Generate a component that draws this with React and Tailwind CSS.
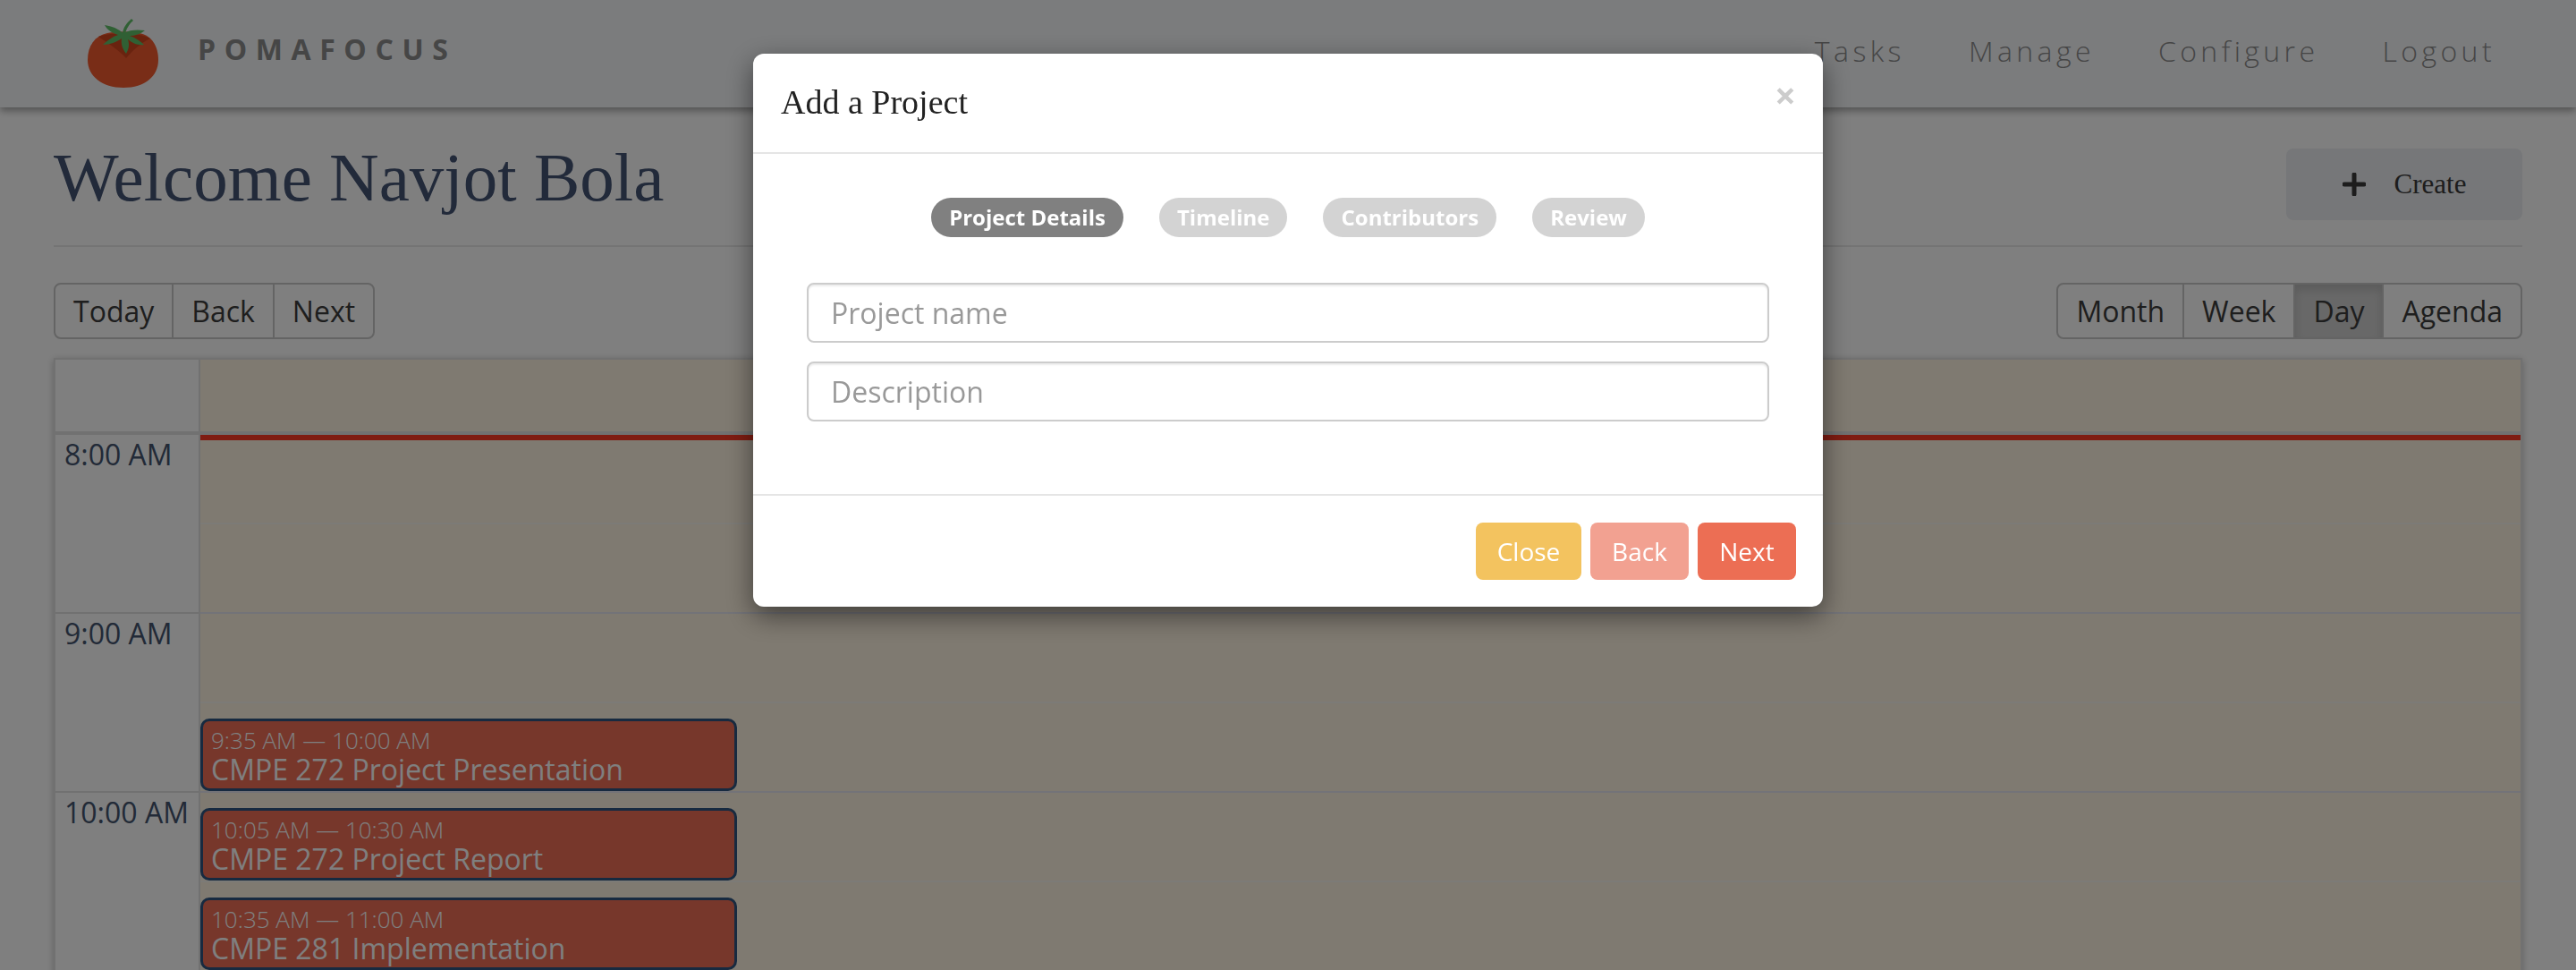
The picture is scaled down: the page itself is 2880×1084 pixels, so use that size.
import React from "react";

const HOURS = ["8:00 AM", "9:00 AM", "10:00 AM", "11:00 AM"];
const NAV_LINKS = ["Tasks", "Manage", "Configure", "Logout"];
const STEPS = ["Project Details", "Timeline", "Contributors", "Review"];

const EVENTS = [
  { id: 1, start: 95, time: "9:35 AM — 10:00 AM", title: "CMPE 272 Project Presentation" },
  { id: 2, start: 125, time: "10:05 AM — 10:30 AM", title: "CMPE 272 Project Report" },
  { id: 3, start: 155, time: "10:35 AM — 11:00 AM", title: "CMPE 281 Implementation" },
];

const PX_PER_MINUTE = 200 / 60;

function TomatoLogo() {
  return (
    <svg viewBox="0 0 130 110" className="w-[130px] h-[110px] shrink-0 blur-[0.6px]">
      <path d="M50 32 C60 30 76 30 86 32 C100 35 107 47 107 62 C107 80 92 93 68 93 C44 93 28 80 28 62 C28 46 36 35 50 32 Z" fill="#f25a2e" />
      <path d="M40 36 C50 31 86 31 98 38 C86 44 78 52 71 60 C64 52 52 44 40 36 Z" fill="#d2461e" />
      <path d="M77 16 C71 21 68 26 67 32 L70 33 C71 28 74 22 79 18 Z" fill="#60c068" />
      <path d="M47 23 C55 24 62 27 68 32 C75 28 84 28 92 29 C87 33 81 35 75 35 C81 37 87 41 91 45 C84 46 78 43 73 39 C75 45 74 50 71 55 C67 50 65 44 66 38 C60 42 53 45 45 45 C50 40 56 36 62 34 C56 32 50 29 47 23 Z" fill="#60c068" />
    </svg>
  );
}

function Toolbar({ items, active }) {
  return (
    <div className="flex h-[63px] border-2 border-[#c8c8c8] rounded-lg">
      {items.map((item, i) => (
        <button
          key={item}
          className={`px-[20px] text-[32px] text-[#3c3c3c] ${i > 0 ? "border-l-2 border-[#c8c8c8]" : ""} ${
            item === active ? "bg-[#d0d0d0] shadow-[inset_0_6px_10px_rgba(0,0,0,0.12)]" : ""
          }`}
        >
          {item}
        </button>
      ))}
    </div>
  );
}

function Calendar() {
  return (
    <div className="mx-[60px] mt-[21px] border-x-2 border-t-2 border-[#e2e2e2] shadow-[0_2px_8px_rgba(0,0,0,0.25)]">
      <div className="flex h-[84px] border-b-4 border-[#e2e2e2]">
        <div className="w-[162px] shrink-0 border-r-2 border-[#e2e2e2]" />
        <div className="flex-1 bg-[#fef4e2]" />
      </div>
      <div className="flex">
        <div className="w-[162px] shrink-0 border-r-2 border-[#e2e2e2]">
          {HOURS.map(hour => (
            <div key={hour} className="h-[200px] border-b-2 border-[#e2e2e2] pl-[10px] pt-[2px] text-[32px] leading-[40px] text-[#44546f]">
              {hour}
            </div>
          ))}
        </div>
        <div className="flex-1 relative bg-[#fef4e2]">
          {HOURS.map(hour => (
            <div key={hour} className="h-[200px] border-b-2 border-[#e6e6f0]">
              <div className="h-[100px] border-b-2 border-[#f8f6ee]" />
            </div>
          ))}
          <div className="absolute left-0 right-0 top-0 h-[6px] bg-[#fe3824]" />
          {EVENTS.map(ev => (
            <div
              key={ev.id}
              className="absolute left-0 w-[600px] h-[81px] rounded-[10px] border-[3px] border-[#2f5580] bg-[#ee6e56] pl-[9px] text-white overflow-hidden"
              style={{ top: ev.start * PX_PER_MINUTE }}
            >
              <div className="text-[26px] font-light leading-[32px] mt-[5px]">{ev.time}</div>
              <div className="text-[32px] leading-[34px]">{ev.title}</div>
            </div>
          ))}
        </div>
      </div>
    </div>
  );
}

function ProjectModal() {
  return (
    <div className="fixed inset-0 bg-black/50 flex justify-center items-start pt-[60px]">
      <div className="w-[1196px] bg-white rounded-xl shadow-[0_10px_30px_rgba(0,0,0,0.5)]">
        <div className="h-[112px] border-b-2 border-[#e5e5e5] flex justify-between pl-[31px] pr-[30px]">
          <h4 className="font-['Liberation_Serif',serif] text-[38px] text-[#222] pt-[26px] leading-[56px]">Add a Project</h4>
          <span className="text-[42px] font-bold text-[#cccccc] leading-[56px] pt-[18px]">×</span>
        </div>

        <div className="px-[60px] pt-[49px] h-[380px]">
          <div className="flex justify-center gap-[40px]">
            {STEPS.map((step, i) => (
              <span
                key={step}
                className={`h-[44px] px-[20px] rounded-full text-white font-bold text-[24px] leading-[44px] ${
                  i === 0 ? "bg-[#808080]" : "bg-[#d3d3d3]"
                }`}
              >
                {step}
              </span>
            ))}
          </div>
          <div className="mt-[51px] flex flex-col gap-[21px]">
            <input
              placeholder="Project name"
              className="h-[67px] w-full border-2 border-[#cccccc] rounded-lg pl-[25px] text-[32px] placeholder:text-[#999] shadow-[inset_0_2px_2px_rgba(0,0,0,0.08)]"
            />
            <input
              placeholder="Description"
              className="h-[67px] w-full border-2 border-[#cccccc] rounded-lg pl-[25px] text-[32px] placeholder:text-[#999] shadow-[inset_0_2px_2px_rgba(0,0,0,0.08)]"
            />
          </div>
        </div>

        <div className="h-[126px] border-t-2 border-[#e5e5e5] flex justify-end items-start gap-[10px] pt-[30px] pr-[30px]">
          <button className="w-[118px] h-[64px] rounded-lg bg-[#f3c35f] text-white text-[28px]">Close</button>
          <button className="w-[110px] h-[64px] rounded-lg bg-[#f2a191] text-white text-[28px]">Back</button>
          <button className="w-[110px] h-[64px] rounded-lg bg-[#ec6e54] text-white text-[28px]">Next</button>
        </div>
      </div>
    </div>
  );
}

export default function App() {
  return (
    <div className="h-screen overflow-hidden bg-white font-['Open_Sans',sans-serif]">
      {/* Navbar */}
      <nav className="h-[120px] bg-[#f6f8fb] shadow-[0_4px_8px_rgba(0,0,0,0.35)] flex items-center justify-between pl-[70px] pr-[90px]">
        <div className="flex items-center gap-[21px]">
          <TomatoLogo />
          <span className="text-[32px] font-bold tracking-[0.3em] text-[#8c8c8c] -mt-[10px]">POMAFOCUS</span>
        </div>
        <div className="flex gap-[71px] -mt-[6px]">
          {NAV_LINKS.map(link => (
            <a key={link} className="text-[32px] font-light tracking-[4.4px] text-[#8c8c8c]">{link}</a>
          ))}
        </div>
      </nav>

      {/* Page header */}
      <div className="mx-[60px] h-[156px] border-b-2 border-[#e8e8e8] flex justify-between">
        <h1 className="font-['Liberation_Serif',serif] text-[77px] leading-[90px] text-[#445474] pt-[33px]">Welcome Navjot Bola</h1>
        <button className="mt-[46px] w-[264px] h-[80px] rounded-lg bg-[#eceef2] flex items-center justify-center gap-[32px]">
          <svg viewBox="0 0 26 26" className="w-[26px] h-[26px]">
            <path d="M13 2v22M2 13h22" stroke="#3a3a3a" strokeWidth="5" strokeLinecap="round" />
          </svg>
          <span className="font-['Liberation_Serif',serif] text-[31px] text-[#3a3a3a]">Create</span>
        </button>
      </div>

      {/* Toolbar */}
      <div className="mx-[60px] mt-[40px] flex justify-between">
        <Toolbar items={["Today", "Back", "Next"]} />
        <Toolbar items={["Month", "Week", "Day", "Agenda"]} active="Day" />
      </div>

      <Calendar />
      <ProjectModal />
    </div>
  );
}
